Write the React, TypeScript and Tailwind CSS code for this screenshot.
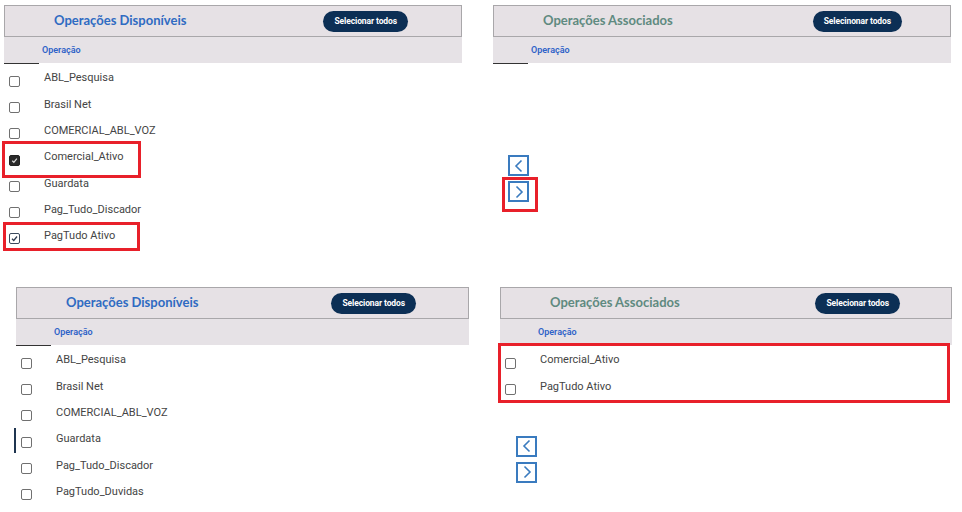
import React from "react";

type Row = { label: string; state?: "checked" | "focus" | "none"; bar?: boolean };

const topLeftRows: Row[] = [
  { label: "ABL_Pesquisa" },
  { label: "Brasil Net" },
  { label: "COMERCIAL_ABL_VOZ" },
  { label: "Comercial_Ativo", state: "focus", bar: true },
  { label: "Guardata" },
  { label: "Pag_Tudo_Discador" },
  { label: "PagTudo Ativo", state: "checked" },
];

const bottomLeftRows: Row[] = [
  { label: "ABL_Pesquisa" },
  { label: "Brasil Net" },
  { label: "COMERCIAL_ABL_VOZ" },
  { label: "Guardata", bar: true },
  { label: "Pag_Tudo_Discador" },
  { label: "PagTudo_Duvidas" },
];

const Checkbox = ({ state = "none" }: { state?: Row["state"] }) => {
  if (state === "focus") {
    return (
      <span className="w-[11px] h-[11px] rounded-[2px] bg-[#2a2a2a] border border-[#222] flex items-center justify-center">
        <svg width="9" height="9" viewBox="0 0 10 10">
          <path d="M2.5 5.2l1.8 1.8L7.6 3" stroke="#dcdcdc" strokeWidth="1.4" fill="none" />
        </svg>
      </span>
    );
  }
  if (state === "checked") {
    return (
      <span className="w-[11px] h-[11px] rounded-[2px] bg-white border-[1.5px] border-[#3b4a5e] flex items-center justify-center">
        <svg width="9" height="9" viewBox="0 0 10 10">
          <path d="M2.2 5.2l2 2L7.8 2.8" stroke="#2d3b50" strokeWidth="1.4" fill="none" />
        </svg>
      </span>
    );
  }
  return <span className="w-[11px] h-[11px] rounded-[2px] bg-white border-[1.5px] border-[#707070]" />;
};

const ListRow = ({ row }: { row: Row }) => (
  <div className="relative flex h-[26.3px] items-center">
    {row.bar && <span className="absolute left-[-2px] top-[3px] h-[25px] w-[2px] bg-[#1f3550]" />}
    <div className="w-[40px] pl-[5px] pt-[8px] flex">
      <Checkbox state={row.state} />
    </div>
    <span className="text-[11px] text-[#444] font-['Roboto',sans-serif] mt-[3px]">{row.label}</span>
  </div>
);

const Header = ({
  title,
  button,
  assoc,
  btnLeft,
}: {
  title: string;
  button: string;
  assoc?: boolean;
  btnLeft: string;
}) => (
  <>
    <div className="flex h-[32px] items-center border border-[#a9a7aa] bg-[#e6e1e5]">
      <span
        className={
          "pl-[49px] text-[13px] font-bold font-['Lato',sans-serif] " +
          (assoc ? "text-[#5f8a80]" : "text-[#2f6bc2]")
        }
      >
        {title}
      </span>
      <span className="flex-1" />
      <span
        className={
          "h-[21px] px-[11px] rounded-full bg-[#0c2f55] text-white text-[8.5px] font-bold font-['Roboto',sans-serif] flex items-center tracking-[-0.1px] " +
          btnLeft
        }
      >
        {button}
      </span>
    </div>
    <div className="h-[26px] bg-[#e6e2e6] flex items-center pl-[38px] pt-[2px]">
      <span className="text-[9px] font-semibold text-[#2f63c8] font-['Roboto',sans-serif]">Operação</span>
    </div>
    <div className="h-[1px] w-[35px] bg-[#333]" />
  </>
);

const ArrowButtons = ({ highlightRight }: { highlightRight?: boolean }) => (
  <div className="flex flex-col gap-[5px] w-[21px]">
    <span className="w-[21px] h-[21px] border-2 border-[#3a7bbf] bg-white flex items-center justify-center">
      <svg width="12" height="14" viewBox="0 0 12 14">
        <path d="M8.5 1.5L3 7l5.5 5.5" stroke="#3a7bbf" strokeWidth="1.6" fill="none" />
      </svg>
    </span>
    <span className="relative w-[21px] h-[21px] border-2 border-[#3a7bbf] bg-white flex items-center justify-center">
      <svg width="12" height="14" viewBox="0 0 12 14">
        <path d="M3.5 1.5L9 7l-5.5 5.5" stroke="#3a7bbf" strokeWidth="1.6" fill="none" />
      </svg>
      {highlightRight && (
        <span className="absolute left-[-8px] top-[-6px] w-[36px] h-[35px] border-[3px] border-[#e8202a]" />
      )}
    </span>
  </div>
);

export default function App() {
  return (
    <div className="w-[962px] h-[512px] bg-white overflow-hidden">
      {/* primeira captura */}
      <div className="flex pt-[5px] pl-[4px] h-[287px]">
        <div className="relative w-[458px]">
          <Header title="Operações Disponíveis" button="Selecionar todos" btnLeft="mr-[53px]" />
          {topLeftRows.map((r) => (
            <ListRow key={r.label} row={r} />
          ))}
          <span className="absolute left-[-2px] top-[136px] w-[139px] h-[37px] border-[3px] border-[#e8202a]" />
          <span className="absolute left-[-1px] top-[217px] w-[137px] h-[29px] border-[3px] border-[#e8202a]" />
        </div>
        <div className="ml-[31px] w-[458px]">
          <Header title="Operações Associados" button="Selecinonar todos" assoc btnLeft="mr-[48px]" />
          <div className="pl-[15px] pt-[91px]">
            <ArrowButtons highlightRight />
          </div>
        </div>
      </div>

      {/* segunda captura */}
      <div className="flex pl-[16px]">
        <div className="w-[453px]">
          <Header title="Operações Disponíveis" button="Selecionar todos" btnLeft="mr-[52px]" />
          {bottomLeftRows.map((r) => (
            <ListRow key={r.label} row={r} />
          ))}
        </div>
        <div className="ml-[31px] w-[452px]">
          <Header title="Operações Associados" button="Selecionar todos" assoc btnLeft="mr-[51px]" />
          <div className="relative">
            <ListRow row={{ label: "Comercial_Ativo" }} />
            <ListRow row={{ label: "PagTudo Ativo" }} />
            <span className="absolute left-[-2px] top-[-3px] w-[452px] h-[60px] border-[3px] border-[#e8202a]" />
          </div>
          <div className="pl-[16px] pt-[37px]">
            <ArrowButtons />
          </div>
        </div>
      </div>
    </div>
  );
}
